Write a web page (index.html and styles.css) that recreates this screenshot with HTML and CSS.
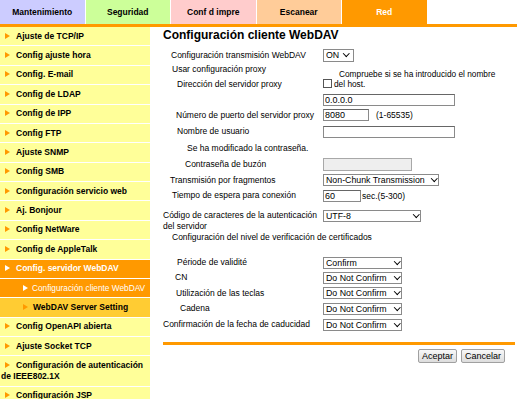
FILE: index.html
```html
<!DOCTYPE html>
<html>
<head>
  <meta charset="utf-8" />
  <title>Configuración cliente WebDAV</title>
  <link rel="stylesheet" href="styles.css">
</head>
<body>
<div id="tabs">
  <div class="tab t-maint">Mantenimiento</div>
  <div class="tab t-seg">Seguridad</div>
  <div class="tab t-conf">Conf d impre</div>
  <div class="tab t-scan">Escanear</div>
  <div class="tab t-red">Red</div>
</div>
<div id="page">
  <div id="menu">
    <div class="item">Ajuste de TCP/IP</div>
    <div class="item">Config ajuste hora</div>
    <div class="item">Config. E-mail</div>
    <div class="item">Config de LDAP</div>
    <div class="item">Config de IPP</div>
    <div class="item">Config FTP</div>
    <div class="item">Ajuste SNMP</div>
    <div class="item">Config SMB</div>
    <div class="item">Configuración servicio web</div>
    <div class="item">Aj. Bonjour</div>
    <div class="item">Config NetWare</div>
    <div class="item">Config de AppleTalk</div>
    <div class="item open">Config. servidor WebDAV</div>
    <div class="item sub cur">Configuración cliente WebDAV</div>
    <div class="item sub sib">WebDAV Server Setting</div>
    <div class="item">Config OpenAPI abierta</div>
    <div class="item">Ajuste Socket TCP</div>
    <div class="item">Configuración de autenticación de IEEE802.1X</div>
    <div class="item">Configuración JSP</div>
  </div>
  <div id="main">
    <h2>Configuración cliente WebDAV</h2>
    <div class="form">
      <div class="lbl in-8">Configuración transmisión WebDAV</div>
      <div class="ctl"><span class="sel w-on"><select><option>ON</option></select></span></div>

      <div class="lbl in-9">Usar configuración proxy</div>
      <div class="host">
        <div class="host-top">Compruebe si se ha introducido el nombre</div>
        <div class="host-bot"><input type="checkbox" class="chk">del host.</div>
      </div>
      <div class="lbl in-14">Dirección del servidor proxy</div>

      <div></div>
      <div class="ctl"><input type="text" class="txt w-132" value="0.0.0.0"></div>

      <div class="lbl in-13">Número de puerto del servidor proxy</div>
      <div class="ctl"><input type="text" class="txt w-46" value="8080"><span class="note">(1-65535)</span></div>

      <div class="lbl in-14">Nombre de usuario</div>
      <div class="ctl"><input type="text" class="txt w-132" value=""></div>

      <div class="lbl in-24 full">Se ha modificado la contraseña.</div>

      <div class="lbl in-22">Contraseña de buzón</div>
      <div class="ctl"><input type="password" class="txt w-89 off" disabled></div>

      <div class="lbl in-7">Transmisión por fragmentos</div>
      <div class="ctl"><span class="sel w-116"><select><option>Non-Chunk Transmission</option></select></span></div>

      <div class="lbl in-9">Tiempo de espera para conexión</div>
      <div class="ctl"><input type="text" class="txt w-38" value="60"><span class="unit">sec.(5-300)</span></div>

      <div class="lbl top">Código de caracteres de la autenticación del servidor</div>
      <div class="ctl top"><span class="sel w-98"><select><option>UTF-8</option></select></span></div>

      <div class="lbl in-9 full">Configuración del nivel de verificación de certificados</div>
      <div class="full"></div>

      <div class="lbl in-14">Période de validité</div>
      <div class="ctl"><span class="sel w-79"><select><option>Confirm</option></select></span></div>

      <div class="lbl in-12">CN</div>
      <div class="ctl"><span class="sel w-79"><select><option>Do Not Confirm</option></select></span></div>

      <div class="lbl in-13">Utilización de las teclas</div>
      <div class="ctl"><span class="sel w-79"><select><option>Do Not Confirm</option></select></span></div>

      <div class="lbl in-17">Cadena</div>
      <div class="ctl"><span class="sel w-79"><select><option>Do Not Confirm</option></select></span></div>

      <div class="lbl">Confirmación de la fecha de caducidad</div>
      <div class="ctl"><span class="sel w-79"><select><option>Do Not Confirm</option></select></span></div>
    </div>
    <div class="rule"></div>
    <div class="buttons">
      <button type="button" class="btn">Aceptar</button>
      <button type="button" class="btn">Cancelar</button>
    </div>
  </div>
</div>
</body>
</html>
```

FILE: styles.css
```css
body {
  margin: 0;
  font-family: "Liberation Sans", Arial, sans-serif;
  color: #000;
  background: #fff;
}

/* top tabs */
#tabs {
  display: flex;
  gap: 1px;
  height: 24px;
  border-bottom: 3px solid #ff9900;
}
.tab {
  width: 84.5px;
  display: flex;
  align-items: center;
  justify-content: center;
  font-size: 8.5px;
  font-weight: bold;
}
.t-maint { background: #ccccff; }
.t-seg { background: #ccff99; }
.t-conf { background: #ffcccc; }
.t-scan { background: #ffcc99; }
.t-red { background: #ff9900; color: #fff; }

#page {
  display: flex;
  align-items: flex-start;
}

/* left menu */
#menu {
  width: 150px;
  flex: none;
  background: #ffff99;
  font-size: 8.5px;
  font-weight: bold;
}
.item {
  padding: 3.7px 2px 3.7px 1px;
  line-height: 11px;
  border-bottom: 1px solid #fff;
}
.item::before {
  content: "";
  display: inline-block;
  border-left: 5px solid #ff9900;
  border-top: 3px solid transparent;
  border-bottom: 3px solid transparent;
  margin: 0 6px 0 4px;
}
.open {
  background: #ff9900;
  color: #fff;
}
.open::before { border-left-color: #fff; }
.sub::before { margin: 0 4px 0 22px; }
.cur {
  background: #ff9900;
  color: #fff;
  font-weight: normal;
  font-size: 8.3px;
}
.cur::before { border-left-color: #fff; }
.sib {
  background: #ffcc33;
}
.sib::before { margin-right: 5px; }

/* main */
#main {
  margin-left: 13px;
  width: 352px;
}
h2 {
  margin: 0 0 4.5px;
  font-size: 12px;
  line-height: 16px;
  font-weight: bold;
}
.form {
  display: grid;
  grid-template-columns: 159px 1fr;
  grid-template-rows: 15px 14.5px 14.75px 15.5px 16.25px 16.5px 16px 16.25px 15.75px 15.5px 27.5px 12px 12px 15px 15.5px 15.5px 15.5px 16px;
  align-items: center;
  font-size: 8.5px;
}
.lbl { line-height: 11px; }
.full { grid-column: span 2; }
.top {
  align-self: start;
  margin-top: 6px;
}
.in-7 { padding-left: 7px; }
.in-8 { padding-left: 8px; }
.in-9 { padding-left: 9px; }
.in-12 { padding-left: 12px; }
.in-13 { padding-left: 13px; }
.in-14 { padding-left: 14px; }
.in-17 { padding-left: 17px; }
.in-22 { padding-left: 22px; }
.in-24 { padding-left: 24px; }

.ctl {
  display: flex;
  align-items: center;
  padding-left: 1px;
}
.host {
  grid-row: span 2;
  align-self: start;
  padding-top: 6px;
  line-height: 10px;
  font-size: 8.3px;
}
.host-top { padding-left: 17px; }
.host-bot {
  display: flex;
  align-items: center;
  padding-left: 1px;
}
.chk {
  appearance: none;
  width: 9px;
  height: 9px;
  margin: 0 2px 0 0;
  border: 1px solid #555;
  background: #fff;
}

.txt {
  box-sizing: border-box;
  height: 12px;
  padding: 0 1px;
  border: 1px solid #8a8a8a;
  border-top-color: #666;
  font-family: "Liberation Sans", Arial, sans-serif;
  font-size: 9px;
  color: #000;
  outline: none;
}
.off {
  height: 13px;
  background: #eeeeee;
  border-color: #a8a8a8;
}
.w-132 { width: 132px; }
.w-46 { width: 46px; }
.w-89 { width: 89px; }
.w-38 { width: 38px; }
.note { margin-left: 7px; font-size: 8.5px; }
.unit { margin-left: 1px; font-size: 8.5px; }

.sel {
  position: relative;
  display: inline-block;
  height: 12px;
}
.sel select {
  appearance: none;
  box-sizing: border-box;
  width: 100%;
  height: 100%;
  margin: 0;
  padding: 0 0 0 2px;
  border: 1px solid #8a8a8a;
  border-radius: 0;
  background: #fff;
  font-family: "Liberation Sans", Arial, sans-serif;
  font-size: 8.8px;
  line-height: 10px;
  color: #000;
}
.sel::after {
  content: "";
  position: absolute;
  right: 3px;
  top: 2px;
  width: 3.5px;
  height: 3.5px;
  border-right: 1.5px solid #000;
  border-bottom: 1.5px solid #000;
  transform: rotate(45deg);
  pointer-events: none;
}
.w-on { width: 31px; height: 13px; }
.w-on::after { right: 6px; top: 2.5px; }
.w-116 { width: 116px; }
.w-98 { width: 98px; }
.w-79 { width: 79px; }

.rule {
  margin-top: 9.5px;
  height: 3px;
  background: #ff9900;
}
.buttons {
  display: flex;
  justify-content: flex-end;
  gap: 4px;
  margin-top: 4px;
  padding-right: 10px;
}
.btn {
  height: 14px;
  padding: 0 3px;
  border: 1px solid #a0a0a0;
  border-radius: 2px;
  background: linear-gradient(#f8f8f8, #dddddd);
  font-family: "Liberation Sans", Arial, sans-serif;
  font-size: 9px;
  line-height: 12px;
  color: #000;
}
```
